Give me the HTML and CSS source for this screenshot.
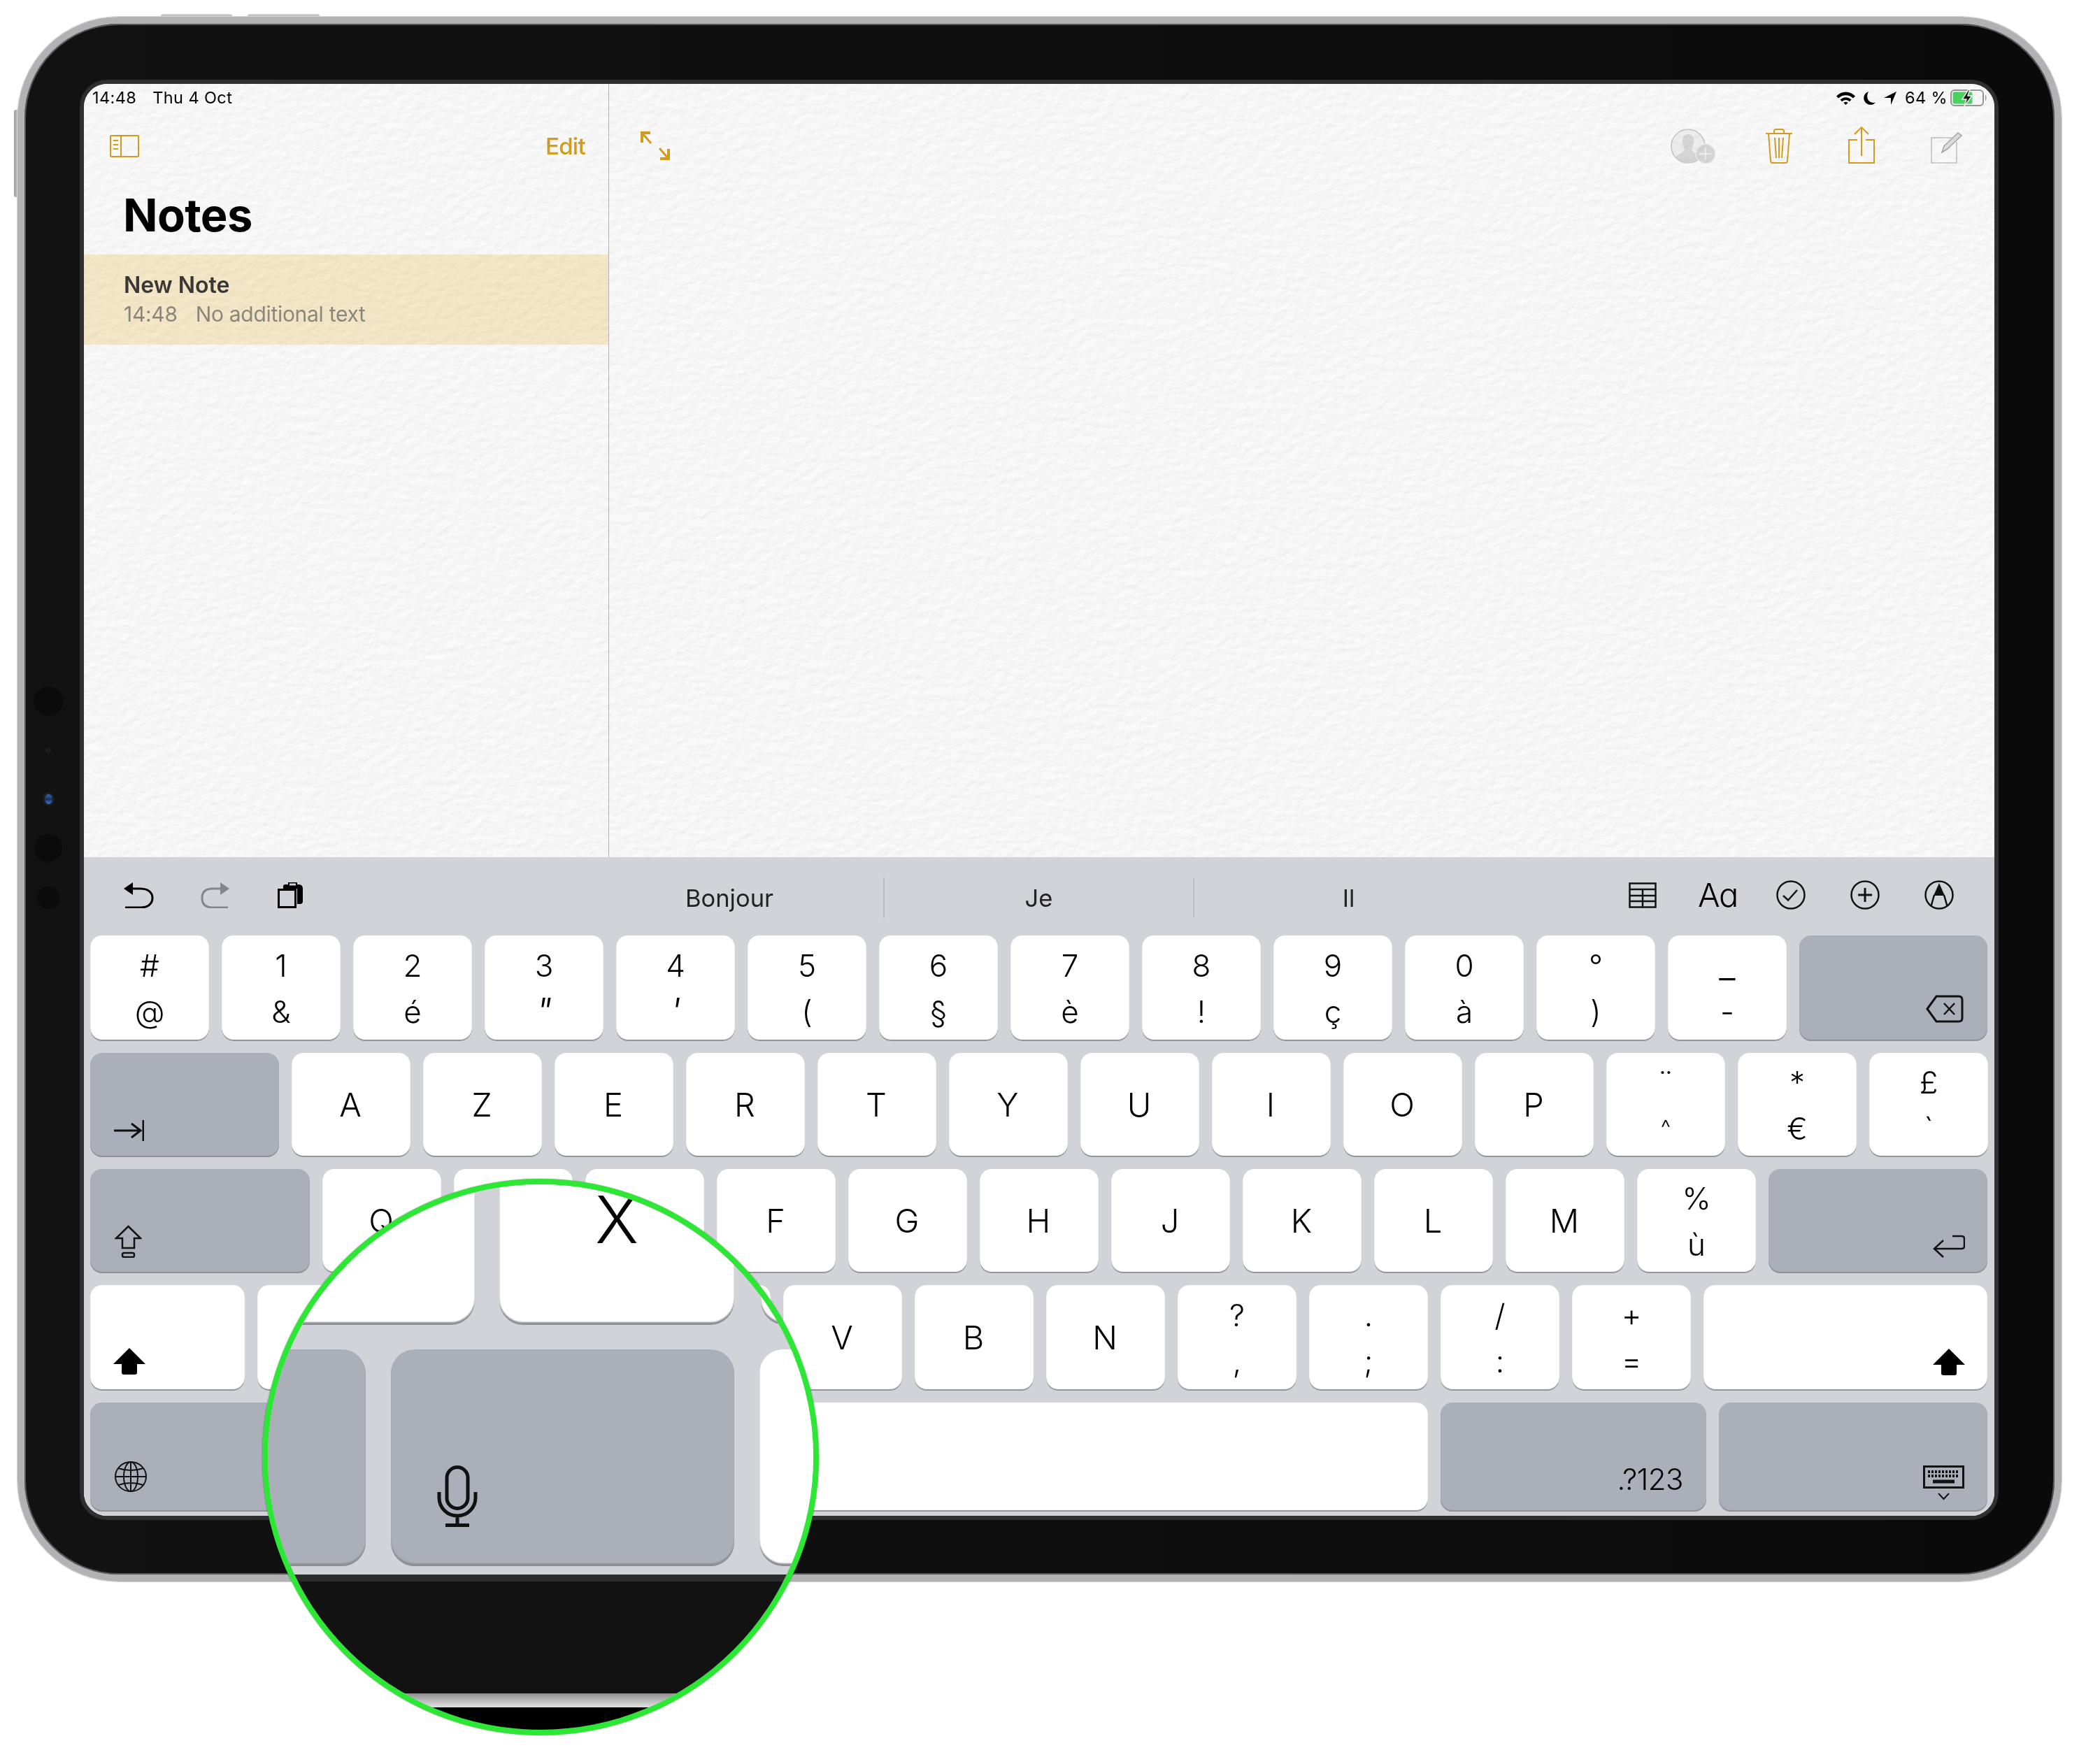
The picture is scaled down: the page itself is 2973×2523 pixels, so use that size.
FILE: index.html
```html
<!DOCTYPE html>
<html lang="en">
<head>
<meta charset="utf-8">
<title>Notes keyboard</title>
<link rel="stylesheet" href="styles.css">
</head>
<body>
<div class="page">
  <span class="hw-btn hw-top-a"></span>
  <span class="hw-btn hw-top-b"></span>
  <span class="hw-btn hw-side"></span>
  <div class="device">
    <span class="cam cam-a"></span>
    <span class="cam cam-dot"></span>
    <span class="cam cam-blue"></span>
    <span class="cam cam-b"></span>
    <span class="cam cam-c"></span>
    <div class="screen">
      <div class="app">
        <aside class="sidebar">
          <div class="status">14:48<span class="status-date">Thu 4 Oct</span></div>
          <div class="side-nav">
            <svg class="ico-sidebar" viewBox="0 0 42 32" width="42" height="32" fill="none" stroke="#d9a21f" stroke-width="2"><rect x="1" y="1" width="40" height="30" rx="1"/><path d="M16 1V31M5 8H12M5 14H12M5 20H12"/></svg>
            <span class="edit">Edit</span>
          </div>
          <h1 class="title">Notes</h1>
          <div class="note-row">
            <div class="note-name">New Note</div>
            <div class="note-meta"><span class="note-time">14:48</span><span>No additional text</span></div>
          </div>
        </aside>
        <main class="editor">
          <div class="status status-right">
            <svg viewBox="0 0 27 19" width="27" height="19"><path d="M0 6.500C7.500 -1.500 19.500 -1.500 27 6.500L24 9.500C18 3.800 9 3.800 3 9.500Z"/><path d="M5.500 11.500C10.500 7 16.500 7 21.500 11.500L18.800 14.200C15.400 11.400 11.600 11.400 8.200 14.200Z"/><path d="M10.400 16C12.400 14.400 14.600 14.400 16.600 16L13.500 19Z"/></svg>
            <svg viewBox="0 0 17 19" width="17" height="19"><path d="M7 0C1.500 2 -1 7.500 .8 12.500C2.600 17.600 9 20.400 14 18C15.200 17.400 16.200 16.600 17 15.600C11.200 17 6.400 13.600 5.400 9C4.800 5.800 5.600 2.600 7 0Z"/></svg>
            <svg viewBox="0 0 18 19" width="18" height="19"><path d="M18 0L10 19V9H0Z"/></svg>
            <span class="battery-pct">64 %</span>
            <svg viewBox="0 0 53 24" width="53" height="24"><rect x="1" y="1" width="46" height="22" rx="5" fill="none" stroke="#9a9a9a" stroke-width="2"/><rect x="3.500" y="3.500" width="28" height="17" rx="2.500" fill="#4cd964"/><path d="M50 8C52 9 52 15 50 16Z" fill="#9a9a9a"/><path d="M26 0L17 14H23L20 24L31 9H25L28 0Z" fill="#111" stroke="#f6f6f6" stroke-width="1.500"/></svg>
          </div>
          <div class="editor-nav">
            <svg class="ico-expand" viewBox="0 0 42 41" width="42" height="41" fill="none" stroke="#d9a21f"><path d="M2 16V2H14" stroke-width="4"/><path d="M2 2L15 17" stroke-width="3"/><path d="M40 25V39H28" stroke-width="4"/><path d="M40 39L27 24" stroke-width="3"/></svg>
            <div class="editor-tools">
              <svg viewBox="0 0 65 50" width="65" height="50"><circle cx="25" cy="25" r="24" fill="#f4f4f4" stroke="#c8c8c8" stroke-width="1.500"/><path d="M25 8C19 8 16 13 17 20C17.500 24 19 27 20 29C20 33 14 35 7 40C11 45 18 49 25 49C32 49 39 45 43 40C36 35 30 33 30 29C31 27 32.500 24 33 20C34 13 31 8 25 8Z" fill="#dcdcdc"/><circle cx="50" cy="36" r="14" fill="#dcdcdc" stroke="#f4f4f4" stroke-width="1.500"/><path d="M50 27V45M41 36H59" stroke="#f7f7f7" stroke-width="1.500"/></svg>
              <svg viewBox="0 0 38 50" width="38" height="50" fill="none" stroke="#d9a21f" stroke-width="2"><path d="M0 7H38M12 7V4Q12 1 15 1H23Q26 1 26 4V7M4 7L7 46Q7 49 10 49H28Q31 49 31 46L34 7M13 13L15 42M19 13V42M25 13L23 42"/></svg>
              <svg viewBox="0 0 38 53" width="38" height="53" fill="none" stroke="#d9a21f" stroke-width="2"><path d="M13 19H1V52H37V19H25M19 42V2M9 11L19 1L29 11"/></svg>
              <svg viewBox="0 0 45 46" width="45" height="46" fill="none"><path d="M30 9H1V45H37V15" stroke="#c6c6c6" stroke-width="1.500"/><path d="M16 30L19 21L39 2L44 6L24 25Z" fill="#e4e4e4" stroke="#a9a9a9" stroke-width="1.500"/></svg>
            </div>
          </div>
        </main>
        <svg class="paper" aria-hidden="true"><filter id="paperGrain" x="0" y="0" width="100%" height="100%" color-interpolation-filters="sRGB"><feTurbulence type="fractalNoise" baseFrequency="0.07 0.1" numOctaves="4" seed="7"/><feDiffuseLighting surfaceScale="0.45" lighting-color="#ffffff"><feDistantLight azimuth="60" elevation="75"/></feDiffuseLighting></filter><rect width="100%" height="100%" filter="url(#paperGrain)"/></svg>
      </div>
      <section class="keyboard">
        <div class="toolbar">
          <div class="tool-left">
            <svg viewBox="0 0 43 37" width="43" height="37" fill="none"><path d="M0 9L13 0V18Z" fill="#000"/><path d="M10 9H24C34 9 41 14 41 22.500C41 31 34 36 24 36H2" stroke="#000" stroke-width="3"/></svg>
            <svg viewBox="0 0 41 37" width="41" height="37" fill="none"><path d="M41 9L28 0V18Z" fill="#85868b"/><path d="M31 9H17C7 9 2 14 2 22.500C2 31 7 36 17 36H39" stroke="#85868b" stroke-width="3"/></svg>
            <svg viewBox="0 0 36 37" width="36" height="37"><path d="M8 9V6Q8 3 11 3H15V0H28V3H30Q36 3 36 9V27Q36 31 32 31H28V9Z" fill="#000"/><rect x="17" y="1.500" width="9" height="3" fill="#d1d3d9"/><rect x="1.500" y="10.500" width="24" height="25" fill="#d1d3d9" stroke="#000" stroke-width="3"/></svg>
          </div>
          <div class="predictions">
            <span class="prediction">Bonjour</span>
            <span class="prediction">Je</span>
            <span class="prediction">Il</span>
          </div>
          <div class="tool-right">
            <svg viewBox="0 0 40 37" width="40" height="37" fill="none" stroke="#111" stroke-width="2.500"><rect x="1.500" y="1.500" width="37" height="34"/><path d="M1 10H39M1 19H39M1 27H39M20 10V36"/></svg>
            <span class="aa">Aa</span>
            <svg viewBox="0 0 42 42" width="42" height="42" fill="none" stroke="#111" stroke-width="2.500"><circle cx="21" cy="21" r="19.500"/><path d="M10 22L17 28.500L30 14"/></svg>
            <svg viewBox="0 0 42 42" width="42" height="42" fill="none" stroke="#111" stroke-width="2.500"><circle cx="21" cy="21" r="19.500"/><path d="M21 11V31M11 21H31" stroke-width="3"/></svg>
            <svg viewBox="0 0 42 42" width="42" height="42" fill="none" stroke="#111" stroke-width="2.500"><circle cx="21" cy="21" r="19.500"/><path d="M21 4L29 22H13Z" fill="#111" stroke="none"/><path d="M14 21L9.500 37M28 21L32.500 37"/></svg>
          </div>
        </div>
        <div class="keys">
          <div class="row">
            <div class="key"><span>#</span><span>@</span></div>
            <div class="key"><span>1</span><span>&amp;</span></div>
            <div class="key"><span>2</span><span>é</span></div>
            <div class="key"><span>3</span><span class="slant">"</span></div>
            <div class="key"><span>4</span><span class="slant">'</span></div>
            <div class="key"><span>5</span><span>(</span></div>
            <div class="key"><span>6</span><span>§</span></div>
            <div class="key"><span>7</span><span>è</span></div>
            <div class="key"><span>8</span><span>!</span></div>
            <div class="key"><span>9</span><span>ç</span></div>
            <div class="key"><span>0</span><span>à</span></div>
            <div class="key"><span>°</span><span>)</span></div>
            <div class="key"><span class="wide">_</span><span>-</span></div>
            <div class="key fn w-del end pad-del"><svg viewBox="0 0 54 40" width="54" height="40" fill="none" stroke="#111" stroke-width="3"><path d="M2 20L15 2H47Q52 2 52 7V33Q52 38 47 38H15Z"/><path d="M26 12L41 28M41 12L26 28" stroke-width="2.500"/></svg></div>
          </div>
          <div class="row">
            <div class="key fn w-tab start pad-tab"><svg viewBox="0 0 43 30" width="43" height="30" fill="none" stroke="#111" stroke-width="3"><path d="M0 15H38M25 5L38 15L25 25M42 0V30"/></svg></div>
            <div class="key letter">A</div>
            <div class="key letter">Z</div>
            <div class="key letter">E</div>
            <div class="key letter">R</div>
            <div class="key letter">T</div>
            <div class="key letter">Y</div>
            <div class="key letter">U</div>
            <div class="key letter">I</div>
            <div class="key letter">O</div>
            <div class="key letter">P</div>
            <div class="key"><span>¨</span><span class="small">^</span></div>
            <div class="key"><span>*</span><span>€</span></div>
            <div class="key"><span>£</span><span>`</span></div>
          </div>
          <div class="row">
            <div class="key fn w-caps start pad-caps"><svg viewBox="0 0 39 47" width="39" height="47" fill="none" stroke="#111" stroke-width="2.500"><path d="M19.500 2L37 19H28V33H11V19H2Z"/><rect x="11" y="40" width="17" height="6" rx="2.500"/></svg></div>
            <div class="key letter">Q</div>
            <div class="key"></div>
            <div class="key"></div>
            <div class="key letter">F</div>
            <div class="key letter">G</div>
            <div class="key letter">H</div>
            <div class="key letter">J</div>
            <div class="key letter">K</div>
            <div class="key letter">L</div>
            <div class="key letter">M</div>
            <div class="key"><span>%</span><span>ù</span></div>
            <div class="key fn w-ret end pad-ret"><svg viewBox="0 0 46 33" width="46" height="33" fill="none" stroke="#111" stroke-width="2.500"><path d="M28 2H41Q45 2 45 6V16Q45 20 41 20H3M15 8L2 20L15 32"/></svg></div>
          </div>
          <div class="row">
            <div class="key w-shift-l start pad-shift-l"><svg viewBox="0 0 46 38" width="46" height="38"><path d="M23 0L46 23H34V35Q34 38 31 38H15Q12 38 12 35V23H0Z" fill="#000"/></svg></div>
            <div class="key"></div>
            <div class="key"></div>
            <div class="key"></div>
            <div class="key"></div>
            <div class="key letter">V</div>
            <div class="key letter">B</div>
            <div class="key letter">N</div>
            <div class="key"><span>?</span><span>,</span></div>
            <div class="key"><span>.</span><span>;</span></div>
            <div class="key"><span>/</span><span>:</span></div>
            <div class="key"><span>+</span><span>=</span></div>
            <div class="key w-shift-r end pad-shift-r"><svg viewBox="0 0 46 38" width="46" height="38"><path d="M23 0L46 23H34V35Q34 38 31 38H15Q12 38 12 35V23H0Z" fill="#000"/></svg></div>
          </div>
          <div class="row">
            <div class="key fn w-globe start pad-globe"><svg viewBox="0 0 46 44" width="46" height="44" fill="none" stroke="#111" stroke-width="2"><ellipse cx="23" cy="22" rx="22" ry="21"/><ellipse cx="23" cy="22" rx="10" ry="21"/><path d="M23 1V43M1 22H45M5 10Q23 16 41 10M5 34Q23 28 41 34"/></svg></div>
            <div class="key fn w-mic"></div>
            <div class="key w-space"></div>
            <div class="key fn w-num end pad-num"><span class="num-label">.?123</span></div>
            <div class="key fn w-hide end pad-hide"><svg viewBox="0 0 59 50" width="59" height="50" fill="none" stroke="#111"><rect x="1.500" y="1.500" width="56" height="30" stroke-width="3"/><path d="M7 9H52M7 15H52" stroke-width="4" stroke-dasharray="3 2"/><path d="M14 23H45" stroke-width="5"/><path d="M22 40L29.500 48L37 40" stroke-width="2"/></svg></div>
          </div>
        </div>
      </section>
    </div>
  </div>
  <div class="lens">
    <div class="lens-key lens-a"></div>
    <div class="lens-key lens-x">X</div>
    <div class="lens-key lens-r"></div>
    <div class="lens-key lens-fn lens-left"></div>
    <div class="lens-key lens-fn lens-mic">
      <svg viewBox="0 0 58 88" width="58" height="88" fill="none" stroke="#111" stroke-width="5"><rect x="14" y="2.500" width="30" height="59" rx="15"/><path d="M3 38V46C3 60 14 72 29 72C44 72 55 60 55 46V38M29 72V85M12 85.500H46"/></svg>
    </div>
    <div class="lens-key lens-space"></div>
    <div class="lens-bezel">
      <div class="lens-edge"></div>
      <div class="lens-black"></div>
      <div class="lens-silver"></div>
      <div class="lens-under"></div>
    </div>
  </div>
</div>
</body>
</html>
```
FILE: styles.css
```css
* { box-sizing: border-box; }
html, body { margin: 0; background: #fff; }
body { font-family: Inter, "Liberation Sans", sans-serif; color: #000; }
.page { position: relative; width: 2973px; height: 2523px; padding: 24px 0 0 25px; overflow: hidden; }

.hw-btn { position: absolute; background: linear-gradient(#d5d5d5, #a8a8a8); }
.hw-top-a { left: 230px; top: 20px; width: 102px; height: 5px; border-radius: 3px 3px 0 0; }
.hw-top-b { left: 354px; top: 20px; width: 103px; height: 5px; border-radius: 3px 3px 0 0; }
.hw-side { left: 20px; top: 157px; width: 6px; height: 125px; border-radius: 3px 0 0 3px; background: linear-gradient(90deg, #9a9a9a, #c9c9c9); }

.device {
  position: relative;
  width: 2923px; height: 2238px;
  padding: 86px 86px 84px 85px;
  border: 10px solid #b2b2b4;
  border-radius: 145px;
  background: linear-gradient(90deg, #121212, #0a0a0a);
  box-shadow: 0 0 0 1px #d4d4d4, inset 0 0 0 2px #555;
}
.cam { position: absolute; border-radius: 50%; background: #0b0b0b; }
.cam-a { left: 13px; top: 948px; width: 42px; height: 42px; }
.cam-dot { left: 30px; top: 1035px; width: 8px; height: 8px; background: #1c1c1c; }
.cam-blue { left: 29px; top: 1102px; width: 11px; height: 14px; background: linear-gradient(#2f6cc0, #17335e 50%, #3a7bd0); box-shadow: 0 0 0 3px #1c1e24; }
.cam-b { left: 14px; top: 1159px; width: 40px; height: 40px; }
.cam-c { left: 18px; top: 1234px; width: 32px; height: 32px; }

.screen {
  position: relative;
  display: flex; flex-direction: column;
  width: 2732px; height: 2048px;
  border-radius: 33px;
  overflow: hidden;
  box-shadow: 0 0 0 6px #2f2f2f;
  background: #fff;
}

.app { position: relative; display: flex; height: 1106px; background: #fff; }
.paper { position: absolute; inset: 0; width: 100%; height: 100%; mix-blend-mode: multiply; pointer-events: none; }
.sidebar { width: 751px; padding-top: 6px; border-right: 1px solid #b9b9b9; }
.editor { flex: 1; padding-top: 6px; }

.status { height: 28px; padding-left: 12px; font-size: 23.500px; line-height: 28px; letter-spacing: .4px; white-space: nowrap; }
.status-date { margin-left: 23px; }
.status-right { display: flex; justify-content: flex-end; align-items: center; gap: 12px; padding: 0 10px 0 0; }
.status-right svg { fill: #000; flex: none; }
.battery-pct { margin-right: -8px; }

.side-nav { display: flex; justify-content: space-between; align-items: center; height: 40px; margin-top: 35px; padding: 0 33px 0 37px; }
.edit { font-size: 33px; font-weight: 500; color: #d9a21f; letter-spacing: -.7px; }
.title { margin: 39px 0 16px; padding-left: 56px; font-size: 65px; line-height: 80px; font-weight: 700; letter-spacing: -.6px; }
.note-row { height: 129px; padding: 24px 0 0 57px; background: #fbeecd; }
.note-name { font-size: 32px; line-height: 40px; font-weight: 600; color: #3c3a37; }
.note-meta { margin-top: 1px; font-size: 30px; line-height: 40px; color: #8f8b80; letter-spacing: -.3px; white-space: nowrap; }
.note-time { margin-right: 26px; }

.editor-nav { display: flex; justify-content: space-between; align-items: flex-end; height: 53px; margin-top: 27px; padding: 0 46px 0 45px; }
.ico-expand { align-self: flex-start; margin-top: 7px; }
.editor-tools { display: flex; align-items: flex-end; }
.editor-tools svg:nth-child(2) { margin-left: 71px; }
.editor-tools svg:nth-child(3) { margin-left: 80px; }
.editor-tools svg:nth-child(4) { margin-left: 80px; }

.keyboard { flex: 1; background: #d1d3d9; padding: 0 10px 6px 9px; }
.toolbar { display: flex; align-items: center; height: 112px; margin-left: -9px; margin-right: -10px; }
.tool-left { display: flex; align-items: center; width: 700px; padding-left: 57px; padding-bottom: 4px; }
.tool-left svg:nth-child(2) { margin-left: 67px; }
.tool-left svg:nth-child(3) { margin-left: 69px; }
.predictions { display: flex; padding-top: 4px; }
.prediction { display: flex; align-items: center; justify-content: center; width: 443px; height: 58px; font-size: 34.500px; color: #222; }
.prediction:first-child { padding-left: 3px; }
.prediction + .prediction { border-left: 2px solid #bcbec5; }
.tool-right { display: flex; align-items: center; margin-left: auto; padding: 0 58px 4px 0; }
.tool-right > :nth-child(2) { margin-left: 59px; }
.tool-right > :nth-child(3) { margin-left: 56px; }
.tool-right > :nth-child(4) { margin-left: 64px; }
.tool-right > :nth-child(5) { margin-left: 64px; }
.aa { width: 56px; font-size: 47px; line-height: 42px; letter-spacing: -1.500px; font-weight: 350; font-feature-settings: "cv11"; white-space: nowrap; }

.keys { display: flex; flex-direction: column; gap: 17px; }
.row { display: flex; gap: 18px; height: 149px; }
.row:first-child { height: 151px; }
.row:nth-child(4) { height: 151px; }
.row:nth-child(5) { height: 156px; }

.key {
  display: flex; flex-direction: column; align-items: center; justify-content: center;
  flex: none; width: 170px;
  border-radius: 17px;
  background: #fff;
  box-shadow: inset 0 -2px 1px #8f9095;
  font-size: 44px; line-height: 66px; font-weight: 350;
}
.key span { display: block; height: 66px; }
.key .slant { font-style: italic; font-size: 52px; }
.key .wide { font-size: 52px; }
.key .small { font-size: 32px; }
.letter { padding: 0 2px 3px 0; font-size: 47px; line-height: 1; }
.fn { background: #abafba; }
.start { align-items: flex-start; justify-content: flex-end; }
.end { align-items: flex-end; justify-content: flex-end; }

.w-del { width: 269px; }
.w-tab { width: 270px; }
.w-caps { width: 314px; }
.w-ret { width: 313px; }
.w-shift-l { width: 221px; }
.w-shift-r { width: 406px; }
.w-globe { width: 332px; }
.w-mic { width: 246px; }
.w-space { width: 1299px; }
.w-num { width: 380px; }
.w-hide { width: 384px; }

.pad-del { padding: 0 34px 26px 0; }
.pad-tab { padding: 0 0 23px 34px; }
.pad-caps { padding: 0 0 22px 35px; }
.pad-ret { padding: 0 32px 22px 0; }
.pad-shift-l { padding: 0 0 23px 33px; }
.pad-shift-r { padding: 0 32px 22px 0; }
.pad-globe { padding: 0 0 28px 35px; }
.pad-num { padding: 0 33px 31px 0; }
.pad-hide { padding: 0 33px 16px 0; }
.key .num-label { height: auto; font-size: 42px; font-weight: 350; line-height: 30px; letter-spacing: -.5px; }

/* magnifier: everything inside is drawn at 2x */
.lens {
  position: absolute;
  left: 375px; top: 1686px;
  width: 796px; height: 796px;
  border: 8px solid #2de735;
  border-radius: 50%;
  background: #d1d3d9;
  overflow: hidden;
  box-shadow: 0 0 2px rgba(0, 0, 0, .45);
}
.lens-key { position: absolute; border-radius: 34px; background: #fff; box-shadow: inset 0 -4px 2px #8f9095; }
.lens-fn { background: #abafba; }
.lens-a { left: -100px; top: -60px; width: 396px; height: 261px; }
.lens-x { left: 331px; top: -60px; width: 336px; height: 261px; font-size: 94px; font-weight: 350; line-height: 220px; text-align: center; }
.lens-r { left: 705px; top: -60px; width: 200px; height: 261px; }
.lens-left { left: -100px; top: 236px; width: 240px; height: 310px; }
.lens-mic { display: flex; align-items: flex-end; left: 176px; top: 236px; width: 491px; height: 310px; padding: 0 0 56px 66px; }
.lens-space { left: 703px; top: 236px; width: 200px; height: 310px; }
.lens-bezel { position: absolute; left: 0; right: 0; top: 558px; bottom: 0; display: flex; flex-direction: column; }
.lens-edge { height: 10px; background: #2c2c2c; }
.lens-black { height: 160px; background: #121212; }
.lens-silver { height: 20px; background: linear-gradient(#8f8f8f, #b9b9b9 50%, #e0e0e0); }
.lens-under { flex: 1; background: #000; }
```
